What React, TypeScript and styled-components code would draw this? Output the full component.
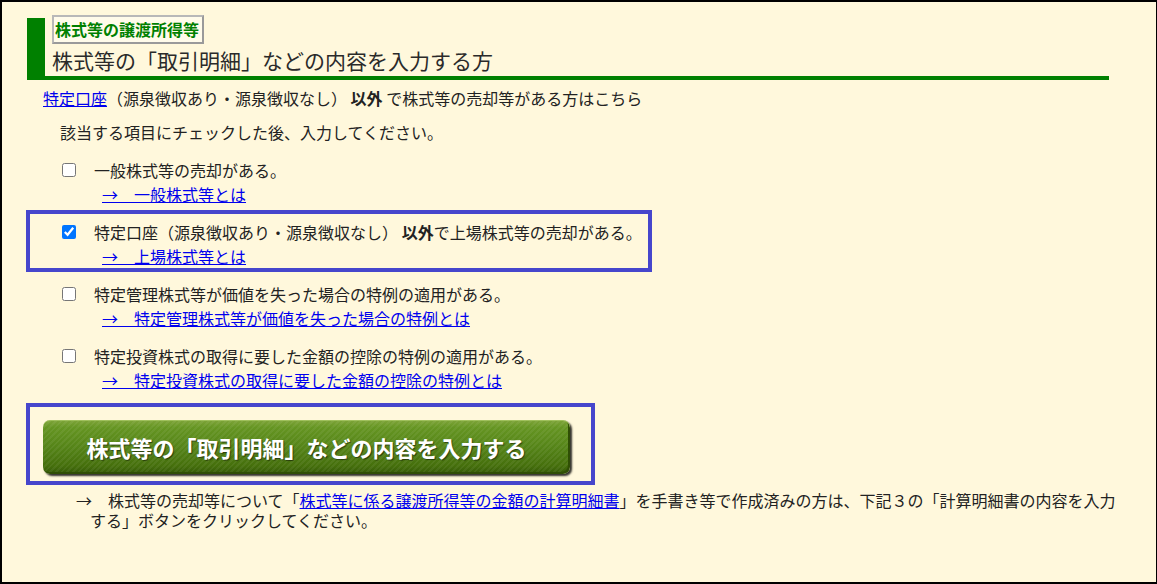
import styled, { createGlobalStyle } from "styled-components"

const GlobalStyle = createGlobalStyle`
  html, body {
    margin: 0;
    padding: 0;
  }
  body {
    font-family: "Noto Sans CJK JP", "Noto Sans", sans-serif;
    color: #222;
  }
`

const green = "#008000"
const highlight = "#4646cc"

const items = [
  {
    label: <>一般株式等の売却がある。</>,
    link: "→　一般株式等とは",
    checked: false,
  },
  {
    label: (
      <>
        特定口座（源泉徴収あり・源泉徴収なし）<b> 以外</b>で上場株式等の売却がある。
      </>
    ),
    link: "→　上場株式等とは",
    checked: true,
  },
  {
    label: <>特定管理株式等が価値を失った場合の特例の適用がある。</>,
    link: "→　特定管理株式等が価値を失った場合の特例とは",
    checked: false,
  },
  {
    label: <>特定投資株式の取得に要した金額の控除の特例の適用がある。</>,
    link: "→　特定投資株式の取得に要した金額の控除の特例とは",
    checked: false,
  },
]

const App = () => {
  return (
    <>
      <GlobalStyle />
      <Frame>
        <Header>
          <Category>株式等の譲渡所得等</Category>
          <Title>株式等の「取引明細」などの内容を入力する方</Title>
        </Header>

        <Intro>
          <Link href="#">特定口座</Link>（源泉徴収あり・源泉徴収なし） <b>以外</b> で株式等の売却等がある方はこちら
        </Intro>

        <Instruction>該当する項目にチェックした後、入力してください。</Instruction>

        <ItemList>
          {items.map((item, i) => (
            <Item key={i} $active={item.checked}>
              <CheckRow>
                <Check type="checkbox" defaultChecked={item.checked} />
                <span>{item.label}</span>
              </CheckRow>
              <LinkRow>
                <Link href="#">{item.link}</Link>
              </LinkRow>
            </Item>
          ))}
        </ItemList>

        <ButtonBox>
          <GreenButton>株式等の「取引明細」などの内容を入力する</GreenButton>
        </ButtonBox>

        <Note>
          <NotePart>→　株式等の売却等について「</NotePart>
          <NoteLink href="#">株式等に係る譲渡所得等の金額の計算明細書</NoteLink>
          <NotePart>」を手書き等で作成済みの方は、下記３の「計算明細書の内容を入力</NotePart>
          <NotePart>する」ボタンをクリックしてください。</NotePart>
        </Note>
      </Frame>
    </>
  )
}

const Frame = styled.div`
  box-sizing: border-box;
  width: 1157px;
  height: 584px;
  border: 2px solid #000;
  border-right-width: 1px;
  background: #fff8dc;
  padding: 16px 0 0 24px;
  font-size: 16px;
  overflow: hidden;
`

const Header = styled.div`
  display: flex;
  flex-direction: column;
  align-items: flex-start;
  width: 1082px;
  margin-left: 1px;
  border-left: 18px solid ${green};
  border-bottom: 4px solid ${green};
  padding-left: 7px;
  box-sizing: border-box;
`

const Category = styled.div`
  margin-top: -3px;
  border: 2px solid #9a9a9a;
  border-top-color: #b8b8b8;
  border-left-color: #b8b8b8;
  background: #fffbea;
  padding: 0 3px 0 1px;
  line-height: 25px;
  font-size: 16px;
  font-weight: bold;
  color: ${green};
`

const Title = styled.div`
  margin-top: 2px;
  padding-bottom: 2px;
  font-size: 21px;
  line-height: 28px;
  color: #2a2a2a;
`

const Link = styled.a`
  color: #0000ee;
  text-decoration: underline;
`

const Intro = styled.div`
  margin: 6px 0 0 17px;
  line-height: 24px;
`

const Instruction = styled.div`
  margin: 10px 0 0 34px;
  line-height: 24px;
`

const ItemList = styled.div`
  display: flex;
  flex-direction: column;
  align-items: flex-start;
  margin-top: 4px;
`

const Item = styled.div<{ $active: boolean }>`
  box-sizing: border-box;
  height: 62px;
  border: 4px solid ${(p) => (p.$active ? highlight : "transparent")};
  padding: 6px 6px 0 32px;

  &:last-child {
    height: 60px;
  }
`

const CheckRow = styled.div`
  display: flex;
  align-items: center;
  gap: 18px;
  height: 24px;
  white-space: nowrap;
`

const Check = styled.input`
  width: 14px;
  height: 14px;
  margin: 0;
  flex: none;
`

const LinkRow = styled.div`
  height: 24px;
  line-height: 24px;
  padding-left: 40px;
  white-space: nowrap;
`

const ButtonBox = styled.div`
  display: inline-block;
  margin-top: 9px;
  border: 4px solid ${highlight};
  padding: 13px 21px 7px 13px;
`

const GreenButton = styled.button`
  display: block;
  width: 527px;
  height: 54px;
  border: none;
  border-radius: 7px;
  font-family: "Noto Sans CJK JP", sans-serif;
  font-size: 22px;
  font-weight: bold;
  color: #fff;
  text-shadow: 1px 1px 1px rgba(0, 0, 0, 0.5);
  cursor: pointer;
  background:
    repeating-linear-gradient(-45deg, rgba(255, 255, 255, 0.06) 0 2px, transparent 2px 4px),
    linear-gradient(#7fa53a 0%, #659522 14%, #558418 50%, #456f0c 85%, #345806 100%);
  box-shadow:
    inset 0 1px 0 #9fc05c,
    inset -2px -2px 0 #304f05,
    2px 2px 2px rgba(0, 0, 0, 0.8);
`

const Note = styled.div`
  margin: 5px 30px 0 0;
  padding-left: 64px;
  text-indent: -14px;
  font-size: 16px;
  line-height: 20px;
`

const NotePart = styled.span`
  display: inline-block;
  text-indent: 0;
  white-space: nowrap;
`

const NoteLink = styled(Link)`
  display: inline-block;
  text-indent: 0;
  white-space: nowrap;
`

export default App
